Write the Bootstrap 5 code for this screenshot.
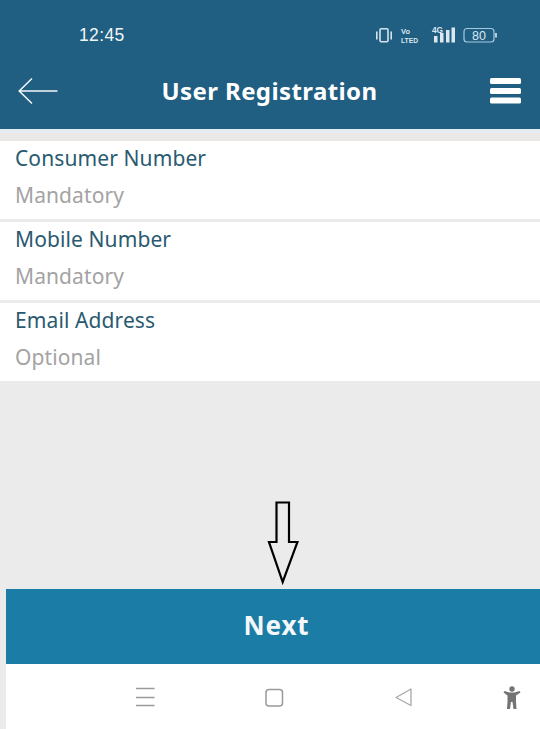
<!DOCTYPE html>
<html lang="en">
<head>
<meta charset="utf-8">
<title>User Registration</title>
<link href="https://cdn.jsdelivr.net/npm/bootstrap@5.3.0/dist/css/bootstrap.min.css" rel="stylesheet">
<style>
html,body{margin:0;height:729px;overflow:hidden}
body{background:#ebebeb;font-family:"Noto Sans","Open Sans",sans-serif;position:relative;width:540px}
.app-head{background:#205e82;height:129px;color:#fff}
.status-row{height:68px;padding:22px 43px 0 79px}
.clock{font-family:"Liberation Sans",sans-serif;font-size:17.500px;line-height:26px;color:#f2f6f8;letter-spacing:.35px}
.title-row{height:61px;padding:0 19px 0 18px}
.app-title{font-size:24px;font-weight:700;line-height:44px;letter-spacing:.4px;margin-left:-9px;margin-bottom:15px}
.back-ic{margin-bottom:15px}
.menu-ic{margin-bottom:15px}
.sheen{height:12px;background:linear-gradient(#e3edf1 0 4px,#ebe9e8 4px)}
.fields{display:flex;flex-direction:column;gap:3px}
.field-row{background:#fff;height:78px;padding:3px 15px 0}
.field-label{font-size:21px;line-height:28px;color:#2a5a70;letter-spacing:.1px}
.field-input{display:block;width:100%;border:0;outline:0;padding:0;background:transparent;font-size:21px;line-height:28px;margin-top:9px;letter-spacing:.1px;color:#333}
.field-input::placeholder{color:#a3a3a3;opacity:1}
.spacer{height:208px}
.bottom-wrap{padding-left:6px;height:140px}
.next-btn{display:block;width:100%;height:75px;background:#1b7da5;color:#f4f8fa;border:0;border-radius:0;font-size:26px;font-weight:700;letter-spacing:.9px;padding:0 0 2px;margin:0;text-align:center}
.next-btn span{margin-left:7px}
.sys-nav{background:#fff;height:65px;position:relative}
.sys-ic{position:absolute;left:0;top:0}
.pointer{position:absolute;left:267px;top:501px}
</style>
</head>
<body>
<header class="app-head">
  <div class="status-row d-flex justify-content-between align-items-start">
    <span class="clock">12:45</span>
    <svg width="122" height="26" viewBox="0 0 122 26" aria-hidden="true" fill="none">
      <g stroke="#d5e3ec" stroke-width="1.600">
        <rect x="5" y="6.800" width="8" height="13" rx="1.200"/>
        <path d="M1.800 9.500v8M16.200 9.500v8"/>
      </g>
      <g font-family="Liberation Sans,sans-serif" font-weight="700" fill="#dce8ef">
        <text x="26" y="11.500" font-size="7.500" textLength="9" lengthAdjust="spacingAndGlyphs">Vo</text>
        <text x="26" y="20.500" font-size="7.500" textLength="17" lengthAdjust="spacingAndGlyphs">LTED</text>
        <text x="57" y="10.500" font-size="8.500" textLength="11" lengthAdjust="spacingAndGlyphs">4G</text>
      </g>
      <g fill="#dce8ef">
        <rect x="59" y="14" width="3.500" height="6.500"/>
        <rect x="65" y="11" width="3.500" height="9.500"/>
        <rect x="71" y="8" width="3.500" height="12.500"/>
        <rect x="76.500" y="5.500" width="3.500" height="15"/>
      </g>
      <rect x="89" y="6.500" width="30" height="13.500" rx="3" stroke="#a5cbe0" stroke-width="1.200"/>
      <path d="M121 11v4.500" stroke="#dce8ef" stroke-width="1.600"/>
      <text x="104" y="18" text-anchor="middle" font-family="Liberation Sans,sans-serif" font-size="12.500" fill="#dce8ef">80</text>
    </svg>
  </div>
  <div class="title-row d-flex justify-content-between align-items-center">
    <svg class="back-ic" width="40" height="28" viewBox="0 0 40 28" aria-hidden="true" fill="none" stroke="#f4f8fa" stroke-width="1.500">
      <path d="M39.500 14H1.500M14 1.500 1.200 14 14 26.500"/>
    </svg>
    <div class="app-title">User Registration</div>
    <svg class="menu-ic" width="31" height="26" viewBox="0 0 31 26" aria-hidden="true" fill="#fff">
      <rect x="0" y="0" width="31" height="6" rx="1.500"/>
      <rect x="0" y="10" width="31" height="6" rx="1.500"/>
      <rect x="0" y="19.500" width="31" height="6" rx="1.500"/>
    </svg>
  </div>
</header>
<div class="sheen"></div>
<form class="fields">
  <div class="field-row">
    <label class="field-label d-block" for="f1">Consumer Number</label>
    <input class="field-input" id="f1" placeholder="Mandatory">
  </div>
  <div class="field-row">
    <label class="field-label d-block" for="f2">Mobile Number</label>
    <input class="field-input" id="f2" placeholder="Mandatory">
  </div>
  <div class="field-row">
    <label class="field-label d-block" for="f3">Email Address</label>
    <input class="field-input" id="f3" placeholder="Optional">
  </div>
</form>
<div class="spacer"></div>
<div class="bottom-wrap">
  <button type="button" class="btn next-btn"><span>Next</span></button>
  <nav class="sys-nav">
    <svg class="sys-ic" width="534" height="65" viewBox="6 664 534 65" aria-hidden="true" fill="none">
      <path d="M136 688.500h18.500M136 697.500h18.500M136 705.500h18.500" stroke="#9a9a9a" stroke-width="1.300"/>
      <rect x="266" y="689.500" width="16.500" height="16.500" rx="3" stroke="#9a9a9a" stroke-width="1.500"/>
      <path d="M411 689 396 697.500 411 705.500Z" stroke="#a8a8a8" stroke-width="1.300" stroke-linejoin="round"/>
      <g fill="#747474">
        <circle cx="512" cy="689" r="2.700"/>
        <path d="M503.500 692.500l1-1.500 5 1.500h5l5-1.500 1 1.500-4.500 3v6l.5 7.500h-3l-1-7h-1.500l-1 7h-3l.5-7.500v-6z"/>
      </g>
    </svg>
  </nav>
</div>
<svg class="pointer" width="32" height="84" viewBox="0 0 32 84" aria-hidden="true" fill="none" stroke="#000" stroke-width="2.200" stroke-linejoin="miter">
  <path d="M9.500 1.500H22V41H30.500L15.700 81 2 41H9.500Z"/>
</svg>
</body>
</html>
